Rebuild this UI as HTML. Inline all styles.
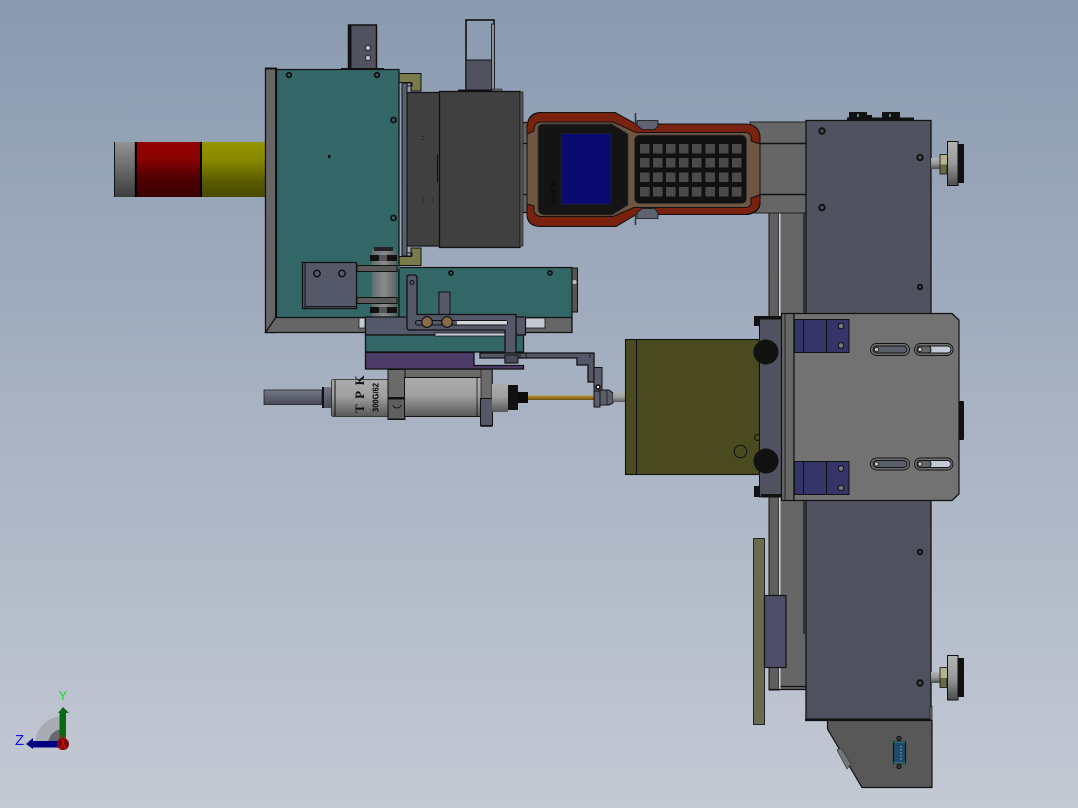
<!DOCTYPE html>
<html><head><meta charset="utf-8"><style>html,body{margin:0;padding:0;width:1078px;height:808px;overflow:hidden}svg{display:block}text{font-family:"Liberation Sans",sans-serif}</style></head><body>
<svg width="1078" height="808" viewBox="0 0 1078 808" xmlns="http://www.w3.org/2000/svg">
<defs>
<linearGradient id="bg" x1="0" y1="0" x2="0" y2="1"><stop offset="0" stop-color="#8a9ab0"/><stop offset="1" stop-color="#c4c9d4"/></linearGradient>
<linearGradient id="gy" x1="0" y1="0" x2="0" y2="1"><stop offset="0" stop-color="#929292"/><stop offset="1" stop-color="#3e3e3e"/></linearGradient>
<linearGradient id="rd" x1="0" y1="0" x2="0" y2="1"><stop offset="0" stop-color="#940000"/><stop offset=".3" stop-color="#880000"/><stop offset=".65" stop-color="#520000"/><stop offset="1" stop-color="#3c0000"/></linearGradient>
<linearGradient id="yl" x1="0" y1="0" x2="0" y2="1"><stop offset="0" stop-color="#949400"/><stop offset=".3" stop-color="#8a8a00"/><stop offset=".7" stop-color="#5c5c00"/><stop offset="1" stop-color="#484800"/></linearGradient>
<linearGradient id="gy0" x1="0" y1="0" x2="0" y2="1"><stop offset="0" stop-color="#acacac"/><stop offset=".45" stop-color="#a0a0a0"/><stop offset="1" stop-color="#585858"/></linearGradient>
<linearGradient id="bs" x1="0" y1="0" x2="0" y2="1"><stop offset="0" stop-color="#747888"/><stop offset="1" stop-color="#484b58"/></linearGradient>
<linearGradient id="au" x1="0" y1="0" x2="0" y2="1"><stop offset="0" stop-color="#c09a30"/><stop offset="1" stop-color="#6a5010"/></linearGradient>
<linearGradient id="dsc" x1="0" y1="0" x2="0" y2="1"><stop offset="0" stop-color="#b4b4b4"/><stop offset=".5" stop-color="#989898"/><stop offset="1" stop-color="#4c4c4c"/></linearGradient>
<linearGradient id="tr" x1="0" y1="0" x2="1" y2="0"><stop offset="0" stop-color="#5f6f70"/><stop offset=".5" stop-color="#8a8a8a"/><stop offset="1" stop-color="#5f6664"/></linearGradient>
</defs>
<rect width="1078" height="808" fill="url(#bg)"/>

<!-- left cylinders -->
<rect x="114" y="142" width="22" height="55" fill="url(#gy)"/>
<rect x="136" y="142" width="65" height="55" fill="url(#rd)"/>
<rect x="201" y="142" width="65" height="55" fill="url(#yl)"/>
<path d="M114.500 142V197" stroke="#111" stroke-width="1"/>
<path d="M135.800 142V197M201 142V197" stroke="#000" stroke-width="2"/>

<!-- column behind right panel -->
<rect x="769" y="213" width="37" height="477" fill="#666"/>
<rect x="769" y="213" width="10" height="477" fill="#5f5f5f" stroke="#111" stroke-width="1"/>
<rect x="779" y="213" width="1.500" height="477" fill="#cfd3da"/>
<path d="M769.500 689.500H806M780.500 686.500H806M804 213V634" stroke="#111" stroke-width="1.200" fill="none"/>

<!-- band behind controller -->
<rect x="750" y="122" width="58" height="91" fill="#666" stroke="#222" stroke-width="1"/>
<path d="M750 143.500H806M750 194.500H806" stroke="#111" stroke-width="1.500"/>
<rect x="520" y="122" width="10" height="91" fill="#666"/>
<path d="M520 122.500H530M520 143.500H530M520 194.500H530M520 212.500H530" stroke="#111" stroke-width="1.300"/>

<!-- top bracket -->
<rect x="348.500" y="25" width="28" height="44" fill="#50535f" stroke="#111" stroke-width="1.500"/>
<rect x="348" y="25" width="3.500" height="44" fill="#111"/>
<rect x="341" y="68" width="43" height="2" fill="#111"/>
<circle cx="368" cy="48" r="2.700" fill="#b8bcc6" stroke="#222"/>
<circle cx="368" cy="58" r="2.700" fill="#b8bcc6" stroke="#222"/>

<!-- translucent top-right -->
<rect x="466" y="20" width="28" height="70" fill="none" stroke="#111" stroke-width="1.600"/>
<rect x="466" y="60" width="26" height="30" fill="#50535f" stroke="#111" stroke-width="1"/>
<rect x="491.500" y="24" width="3" height="66" fill="#8a8f9c" stroke="#111" stroke-width=".8"/>
<rect x="458" y="89.500" width="40" height="2" fill="#111"/>
<rect x="492" y="89" width="10" height="3" fill="#666" stroke="#222" stroke-width=".6"/>

<!-- dark block -->
<rect x="407" y="92.500" width="33" height="153.500" fill="#404040" stroke="#111" stroke-width="1.200"/>
<rect x="439.500" y="91.500" width="80.500" height="156" fill="#404040" stroke="#111" stroke-width="1.300"/>
<path d="M520 92H523V246H520z" fill="#555" stroke="#222" stroke-width=".7"/>
<path d="M437.500 154.500V182.500" stroke="#111" stroke-width="1"/>
<path d="M423 136v1M423 139v1M423 198v1M423 201v1M433 198v1M433 201v1" stroke="#111" stroke-width="1"/>

<!-- olive clips -->
<path d="M399 73.500H421V91H411V82.500H399z" fill="#7a7a4a" stroke="#111" stroke-width="1"/>
<path d="M399 265.500H421V248H411V256.500H399z" fill="#7a7a4a" stroke="#111" stroke-width="1"/>
<rect x="402" y="83" width="5" height="173" fill="#5b5f6a" stroke="#111" stroke-width="1"/>
<path d="M404 83H412V86H407M404 256H412V253H407" fill="none" stroke="#111" stroke-width="1"/>

<!-- left frame + lower frame -->
<rect x="265.500" y="68.500" width="11" height="264" fill="#666" stroke="#111" stroke-width="1.300"/>
<path d="M265.500 332.500L276 317H572V332.500z" fill="#666" stroke="#111" stroke-width="1.300"/>
<rect x="265" y="67.500" width="12" height="2" fill="#111"/>
<rect x="275" y="68" width="2" height="250" fill="#111"/>

<!-- teal panels -->
<rect x="276.500" y="69.500" width="122.500" height="248" fill="#336666" stroke="#111" stroke-width="1.200"/>
<rect x="399" y="267.500" width="173" height="50" fill="#336666" stroke="#111" stroke-width="1.200"/>
<rect x="372" y="266" width="28" height="3" fill="#336666"/>
<rect x="572" y="268" width="5.500" height="44" fill="#555" stroke="#111" stroke-width="1"/>
<circle cx="574.500" cy="282" r="2" fill="#bbb"/>
<rect x="359" y="318" width="6" height="10" fill="#c3c9d3" stroke="#111" stroke-width=".7"/>
<rect x="521" y="318" width="24" height="10" fill="#c3c9d3" stroke="#111" stroke-width=".8"/>
<g fill="#336666" stroke="#111" stroke-width="1.800">
<circle cx="289" cy="75" r="2.300"/><circle cx="377" cy="75" r="2.300"/><circle cx="393.500" cy="120" r="2.500"/><circle cx="393.500" cy="218" r="2.500"/><circle cx="451" cy="273" r="2"/><circle cx="550" cy="273" r="2"/>
</g>
<rect x="328" y="155" width="2.500" height="3" fill="#111"/>

<!-- translucent roller -->
<rect x="372" y="250" width="24" height="70" fill="url(#tr)"/>
<rect x="370" y="255" width="27" height="6" fill="#111"/>
<rect x="374" y="247" width="19" height="4" fill="#222"/>
<rect x="370" y="307" width="27" height="6" fill="#111"/>
<rect x="374" y="317" width="19" height="3" fill="#222"/>
<path d="M380 255v6M382 255v6M384 255v6M386 255v6M380 307v6M382 307v6M384 307v6M386 307v6" stroke="#999" stroke-width="1"/>

<!-- bracket box and arms -->
<rect x="357" y="265.500" width="40" height="6" fill="#5a5a5a" stroke="#111" stroke-width="1"/>
<rect x="357" y="297.500" width="40" height="6" fill="#5a5a5a" stroke="#111" stroke-width="1"/>
<rect x="302.500" y="262.500" width="54" height="46" fill="#555868" stroke="#111" stroke-width="1.300"/>
<path d="M305 262.500V308.500M305 306.500H356" stroke="#111" stroke-width="1"/>
<circle cx="317" cy="273.500" r="3.200" fill="#555868" stroke="#111" stroke-width="1.500"/>
<circle cx="342" cy="273.500" r="3.200" fill="#555868" stroke="#111" stroke-width="1.500"/>

<!-- lower stack -->
<rect x="365.500" y="317" width="160" height="18" fill="#555868" stroke="#111" stroke-width="1.200"/>
<rect x="365.500" y="335" width="158" height="17" fill="#336666" stroke="#111" stroke-width="1.300"/>
<path d="M365.500 352.500H474V365.500H523.500V369H365.500z" fill="#4e3c68" stroke="#111" stroke-width="1.300"/>
<rect x="435" y="333" width="82" height="3" fill="#c3c9d3" stroke="#111" stroke-width=".7"/>

<!-- lever -->
<rect x="439" y="292" width="11" height="24" fill="#555868" stroke="#111" stroke-width="1"/>
<path d="M407 277Q407 275 410 275H414Q417 275 417 278V314.500H516V363H505V330H409Q407 330 407 327z" fill="#555868" stroke="#111" stroke-width="1.300"/>
<circle cx="412" cy="282.500" r="2" fill="#555868" stroke="#111"/>
<rect x="415.500" y="320.500" width="92" height="4.500" rx="2" fill="#555868" stroke="#111" stroke-width="1"/>
<rect x="457" y="321" width="50" height="3.500" fill="#d0d4dc"/>
<circle cx="427" cy="322" r="5.300" fill="#8a6a48" stroke="#111" stroke-width="1.200"/>
<circle cx="447" cy="322" r="5.300" fill="#8a6a48" stroke="#111" stroke-width="1.200"/>

<!-- arm bracket -->
<path d="M480 353H594V382H588V365H577V358H480z" fill="#555868" stroke="#111" stroke-width="1.300"/>
<path d="M520 353V358M526 353V358M590 353V358" stroke="#111" stroke-width=".8"/>
<rect x="505" y="355" width="13" height="8" fill="#484b58" stroke="#111" stroke-width="1"/>
<rect x="594" y="367.500" width="8" height="24" fill="#5a5d6a" stroke="#111" stroke-width="1"/>
<circle cx="598" cy="387" r="2" fill="#ddd" stroke="#111" stroke-width="1.500"/>

<!-- cylinder assembly -->
<rect x="264" y="390" width="58" height="14.500" fill="url(#bs)" stroke="#222" stroke-width=".8"/>
<rect x="322" y="387" width="2.500" height="21" fill="#111"/>
<rect x="324" y="387" width="8" height="21" fill="url(#bs)"/>
<rect x="331.500" y="379.500" width="57" height="37" rx="2" fill="url(#gy0)" stroke="#222" stroke-width=".8"/>
<path d="M335 380V416" stroke="#111" stroke-width="1"/>
<rect x="388.500" y="369.500" width="104" height="16" fill="#6a6a6a" stroke="#222" stroke-width=".8"/>
<rect x="388" y="369.500" width="17" height="50" fill="#6a6a6a" stroke="#111" stroke-width="1"/>
<rect x="388" y="398" width="17" height="21" fill="#5f5f5f" stroke="#111" stroke-width="1"/>
<rect x="388" y="397" width="17" height="2.500" fill="#111"/>
<path d="M393 405a4 3 0 0 0 8 0" fill="none" stroke="#111" stroke-width=".8"/>
<rect x="404.500" y="377.500" width="77" height="39" fill="url(#gy0)" stroke="#111" stroke-width="1"/>
<path d="M477 378V416" stroke="#111" stroke-width=".8"/>
<rect x="481" y="369.500" width="11" height="57" fill="#6a6a6a" stroke="#222" stroke-width=".8"/>
<rect x="480.500" y="398.500" width="12" height="27" fill="#555868" stroke="#111" stroke-width="1"/>
<rect x="492" y="384" width="16" height="28" fill="url(#gy0)"/>
<rect x="508" y="385" width="10" height="25" fill="#111"/>
<rect x="518" y="392" width="10" height="11" fill="#0b0b0b"/>
<rect x="528" y="395.500" width="66" height="4.500" fill="url(#au)"/>
<rect x="594" y="391" width="6" height="16" fill="#5c5f6a" stroke="#111" stroke-width="1"/>
<path d="M600 390H609L613 393V403L609 405H600z" fill="#5c5f6a" stroke="#111" stroke-width="1"/>
<path d="M607 390V405" stroke="#111" stroke-width=".7"/>
<rect x="613" y="393" width="13" height="9" fill="url(#gy0)"/>
<text transform="translate(364 413) rotate(-90)" font-size="13" font-weight="bold" font-family="Liberation Serif, serif" fill="#111" letter-spacing="5.500" style="font-family:'Liberation Serif',serif">TPK</text>
<text transform="translate(378.500 412) rotate(-90)" font-size="8.500" font-weight="bold" fill="#000" textLength="29" lengthAdjust="spacingAndGlyphs">300G/62</text>

<!-- controller -->
<path d="M527 129Q527 113 540 112.500H615L636 124.500H748Q760 126 760 138V203Q760 212 748 214.500H636L616 226.500H540Q527 226 527 214z" fill="#6f5640" stroke="#111" stroke-width="1"/>
<path d="M527 134V127Q528 114 540 112.500H615L636 124H746Q760 125 760 138V144L751 141V136Q750 133 746 132.500H636L613 122H541Q535 122 534 128V131z" fill="#7a2210" stroke="#111" stroke-width="1"/>
<path d="M527 204V214Q527 226 540 226.500H616L636 214.500H746Q760 212 760 202V195L751 198V204Q750 207 746 207.500H634L613 216.500H541Q535 216 534 211V206z" fill="#7a2210" stroke="#111" stroke-width="1"/>
<path d="M538 128Q538 124 544 124H612L628 134V205L612 215H544Q538 214 538 208z" fill="#141414" stroke="#333" stroke-width=".8"/>
<rect x="561" y="133.500" width="50" height="71" fill="#0a0a70" stroke="#222" stroke-width=".7"/>
<text transform="translate(556 203) rotate(-90)" font-size="6.500" font-weight="bold" fill="#050505" letter-spacing=".3">QUICK</text>
<rect x="634.500" y="135" width="112" height="68.500" rx="5" fill="#111" stroke="#3a3a3a" stroke-width=".8"/>
<g fill="#4a4a4a">
<rect x="640" y="144" width="9.500" height="9.500"/><rect x="653" y="144" width="9.500" height="9.500"/><rect x="666" y="144" width="9.500" height="9.500"/><rect x="679" y="144" width="9.500" height="9.500"/><rect x="692" y="144" width="9.500" height="9.500"/><rect x="705.500" y="144" width="9.500" height="9.500"/><rect x="719" y="144" width="9.500" height="9.500"/><rect x="732" y="144" width="9.500" height="9.500"/>
<rect x="640" y="158" width="9.500" height="9.500"/><rect x="653" y="158" width="9.500" height="9.500"/><rect x="666" y="158" width="9.500" height="9.500"/><rect x="679" y="158" width="9.500" height="9.500"/><rect x="692" y="158" width="9.500" height="9.500"/><rect x="705.500" y="158" width="9.500" height="9.500"/><rect x="719" y="158" width="9.500" height="9.500"/><rect x="732" y="158" width="9.500" height="9.500"/>
<rect x="640" y="172.500" width="9.500" height="9.500"/><rect x="653" y="172.500" width="9.500" height="9.500"/><rect x="666" y="172.500" width="9.500" height="9.500"/><rect x="679" y="172.500" width="9.500" height="9.500"/><rect x="692" y="172.500" width="9.500" height="9.500"/><rect x="705.500" y="172.500" width="9.500" height="9.500"/><rect x="719" y="172.500" width="9.500" height="9.500"/><rect x="732" y="172.500" width="9.500" height="9.500"/>
<rect x="640" y="187" width="9.500" height="9.500"/><rect x="653" y="187" width="9.500" height="9.500"/><rect x="666" y="187" width="9.500" height="9.500"/><rect x="679" y="187" width="9.500" height="9.500"/><rect x="692" y="187" width="9.500" height="9.500"/><rect x="705.500" y="187" width="9.500" height="9.500"/><rect x="719" y="187" width="9.500" height="9.500"/><rect x="732" y="187" width="9.500" height="9.500"/>
</g>
<path d="M637 120.500H658V126L655 129.500H642L637 125z" fill="#5f6272" stroke="#111" stroke-width=".8"/>
<path d="M637 218.500H658V213L655 208.500H642L637 213z" fill="#5f6272" stroke="#111" stroke-width=".8"/>
<path d="M635.500 113V125M635.500 214V225" stroke="#333" stroke-width="1.500"/>

<!-- right panel -->
<rect x="806" y="120.500" width="125" height="600" fill="#50535f" stroke="#111" stroke-width="1.300"/>
<rect x="805" y="718.500" width="127" height="2.500" fill="#111"/>
<rect x="849" y="112" width="18" height="6" fill="#111"/><rect x="866" y="115" width="6" height="3" fill="#111"/><rect x="882" y="112" width="18" height="6" fill="#111"/>
<rect x="847" y="117.500" width="67" height="2.500" fill="#111"/>
<rect x="857" y="114" width="2" height="3" fill="#5a8a8a"/><rect x="889" y="114" width="2" height="3" fill="#5a8a8a"/>
<g fill="#50535f" stroke="#111" stroke-width="2">
<circle cx="822" cy="131" r="2.700"/><circle cx="920" cy="157.500" r="2.700"/><circle cx="822" cy="207.500" r="2.700"/><circle cx="920" cy="287" r="2.200"/><circle cx="920" cy="552" r="2.200"/><circle cx="920" cy="683" r="2.700"/>
</g>

<!-- knobs -->
<g>
<rect x="931" y="158" width="9" height="11" fill="url(#dsc)"/>
<rect x="940" y="154.500" width="7" height="19.500" fill="#6a6a48" stroke="#111" stroke-width=".8"/>
<rect x="940.500" y="155" width="6.500" height="9.500" fill="#b4b48c"/>
<rect x="947.500" y="141.500" width="10.500" height="44" fill="url(#dsc)" stroke="#111" stroke-width="1"/>
<rect x="958" y="144" width="6" height="39" fill="#111"/>
<rect x="931" y="672" width="9" height="11" fill="url(#dsc)"/>
<rect x="940" y="667.500" width="7" height="20" fill="#6a6a48" stroke="#111" stroke-width=".8"/>
<rect x="940.500" y="668" width="6.500" height="10" fill="#b4b48c"/>
<rect x="947.500" y="655.500" width="10.500" height="44.500" fill="url(#dsc)" stroke="#111" stroke-width="1"/>
<rect x="958" y="658" width="6" height="39" fill="#111"/>
</g>

<!-- olive box -->
<rect x="625.500" y="339.500" width="134" height="135" fill="#4a4a20" stroke="#111" stroke-width="1.100"/>
<path d="M636.500 340V474" stroke="#111" stroke-width="1.100"/>
<circle cx="740.500" cy="451.500" r="6.200" fill="none" stroke="#111"/>
<circle cx="757.500" cy="437.500" r="3" fill="none" stroke="#111"/>

<!-- carriage -->
<rect x="754" y="316" width="8" height="10" fill="#111"/>
<rect x="754" y="486" width="8" height="11" fill="#111"/>
<rect x="759.500" y="319" width="23" height="178" fill="#50535f" stroke="#111" stroke-width="1"/>
<rect x="761" y="316" width="20" height="3" fill="#111"/>
<rect x="761" y="494" width="20" height="3" fill="#111"/>
<rect x="781.500" y="313.500" width="12.500" height="187" fill="#666" stroke="#111" stroke-width="1.200"/>
<path d="M785 314V500" stroke="#111" stroke-width=".8"/>
<circle cx="766" cy="352" r="12.500" fill="#111"/>
<circle cx="766" cy="461" r="12.500" fill="#111"/>

<!-- plate -->
<path d="M794 313.500H952L959 320V494L952 500.500H794z" fill="#727272" stroke="#111" stroke-width="1.200"/>
<rect x="959" y="401" width="5" height="39" fill="#111" rx="1"/>
<rect x="794.500" y="319.500" width="54.500" height="33" fill="#35356a" stroke="#111" stroke-width="1"/>
<path d="M803.500 320V352M826.500 320V352" stroke="#111" stroke-width="1"/>
<circle cx="841" cy="326" r="2.800" fill="#777" stroke="#111"/><circle cx="841" cy="345.500" r="2.800" fill="#777" stroke="#111"/>
<rect x="794.500" y="461.500" width="54.500" height="33" fill="#35356a" stroke="#111" stroke-width="1"/>
<path d="M803.500 462V494M826.500 462V494" stroke="#111" stroke-width="1"/>
<circle cx="841" cy="468.500" r="2.800" fill="#777" stroke="#111"/><circle cx="841" cy="488" r="2.800" fill="#777" stroke="#111"/>
<g fill="none" stroke="#111" stroke-width=".9">
<rect x="870.500" y="343.500" width="39" height="12" rx="6"/><rect x="914.500" y="343.500" width="38.500" height="12" rx="6"/>
<rect x="870.500" y="458" width="39" height="12" rx="6"/><rect x="914.500" y="458" width="38.500" height="12" rx="6"/>
</g>
<g stroke="#111" stroke-width=".9">
<rect x="873" y="346" width="34" height="7" rx="3.500" fill="#5a5d6a"/><rect x="917" y="346" width="34" height="7" rx="3.500" fill="#c3c9d6"/>
<rect x="873" y="460.500" width="34" height="7" rx="3.500" fill="#5a5d6a"/><rect x="917" y="460.500" width="34" height="7" rx="3.500" fill="#c3c9d6"/>
<rect x="917" y="346" width="14" height="7" rx="3" fill="#666"/><rect x="917" y="460.500" width="14" height="7" rx="3" fill="#666"/>
</g>
<g fill="#ccc" stroke="#111" stroke-width=".8">
<circle cx="876.500" cy="349.500" r="2"/><circle cx="920" cy="349.500" r="2"/><circle cx="876.500" cy="464" r="2"/><circle cx="920" cy="464" r="2"/>
</g>

<!-- lower left plate -->
<rect x="753.500" y="538.500" width="11" height="186" fill="#6a6a50" stroke="#222" stroke-width="1"/>
<rect x="764.500" y="595.500" width="21.500" height="72" fill="#4e4e68" stroke="#111" stroke-width="1.200"/>

<!-- lower body -->
<path d="M827.500 720.500H932V787.500H862L827.500 729z" fill="#585858" stroke="#111" stroke-width="1.200"/>
<path d="M930 706.500H932V720H930z" fill="#777" stroke="#111" stroke-width=".7"/>
<path d="M837 750L841 748L851 764L847 769z" fill="#6f7a78" stroke="#333" stroke-width=".7"/>
<rect x="893.500" y="741.500" width="12" height="22" fill="#204a6a" stroke="#111" stroke-width="1.200"/>
<path d="M893.500 742H905.500M893.500 763H905.500" stroke="#4a8a88" stroke-width="1"/>
<circle cx="899" cy="738.500" r="2.200" fill="#333" stroke="#111"/><circle cx="899" cy="766.500" r="2.200" fill="#333" stroke="#111"/>
<path d="M901 746v14" stroke="#6f8fb0" stroke-width="1.500" stroke-dasharray="1.500 1.500"/>

<!-- triad -->
<path d="M35 744A28 28 0 0 1 63 716V744z" fill="#a9acb2"/>
<path d="M48 744A15 15 0 0 1 63 729V744z" fill="#666a70"/>
<rect x="59.500" y="713" width="6.500" height="30" fill="#0a6a14"/>
<path d="M58 713L63 707L69 713z" fill="#0a6a14"/>
<rect x="32" y="741" width="28" height="6.500" fill="#000080"/>
<path d="M33 738L26 744L33 749z" fill="#000080"/>
<circle cx="63" cy="744" r="6" fill="#7a0808"/>
<path d="M60 735L66 750M66 735L60 750" stroke="#e01010" stroke-width="1"/>
<text x="58.500" y="700" font-size="13" fill="#10e020">Y</text>
<text x="15" y="745" font-size="15" fill="#1010e0">Z</text>
</svg>
</body></html>
